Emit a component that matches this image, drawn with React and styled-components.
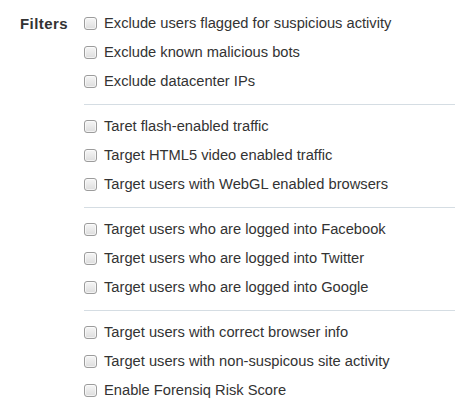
import React from "react";
import styled, { createGlobalStyle } from "styled-components";

const GlobalStyle = createGlobalStyle`
  html, body { margin: 0; padding: 0; background: #fff; }
  body { font-family: "Liberation Sans", Arial, sans-serif; font-size: 14.7px; color: #333; }
`;

const Panel = styled.div`
  display: flex;
  padding: 9px 0 0 20px;
`;

const Label = styled.div`
  width: 64px;
  flex: none;
  font-weight: bold;
  font-size: 15px;
  letter-spacing: 0.45px;
  line-height: 29px;
  color: #333;
`;

const Options = styled.div`
  flex: 1;
  display: flex;
  flex-direction: column;
`;

const Group = styled.div`
  display: flex;
  flex-direction: column;
`;

const Divider = styled.hr`
  border: 0;
  border-top: 1px solid #d5dde3;
  margin: 8px 0 7px 0;
  height: 0;
`;

const Row = styled.label`
  display: flex;
  align-items: center;
  height: 29px;
  line-height: 29px;
  gap: 7px;
  white-space: nowrap;
  cursor: pointer;
`;

const Box = styled.input.attrs({ type: "checkbox" })`
  appearance: none;
  -webkit-appearance: none;
  margin: 0;
  flex: none;
  width: 13px;
  height: 13px;
  box-sizing: border-box;
  border: 1px solid #9c9c9c;
  border-radius: 3px;
  background: linear-gradient(#f6f6f6, #dddddd);
  box-shadow: inset 0 0 0 1px rgba(255, 255, 255, 0.6);
`;

const groups = [
  [
    "Exclude users flagged for suspicious activity",
    "Exclude known malicious bots",
    "Exclude datacenter IPs",
  ],
  [
    "Taret flash-enabled traffic",
    "Target HTML5 video enabled traffic",
    "Target users with WebGL enabled browsers",
  ],
  [
    "Target users who are logged into Facebook",
    "Target users who are logged into Twitter",
    "Target users who are logged into Google",
  ],
  [
    "Target users with correct browser info",
    "Target users with non-suspicous site activity",
    "Enable Forensiq Risk Score",
  ],
];

export default function App() {
  return (
    <>
      <GlobalStyle />
      <Panel>
        <Label>Filters</Label>
        <Options>
          {groups.map((g, gi) => (
            <React.Fragment key={gi}>
              {gi > 0 && <Divider />}
              <Group>
                {g.map((t) => (
                  <Row key={t}>
                    <Box />
                    <span>{t}</span>
                  </Row>
                ))}
              </Group>
            </React.Fragment>
          ))}
        </Options>
      </Panel>
    </>
  );
}
